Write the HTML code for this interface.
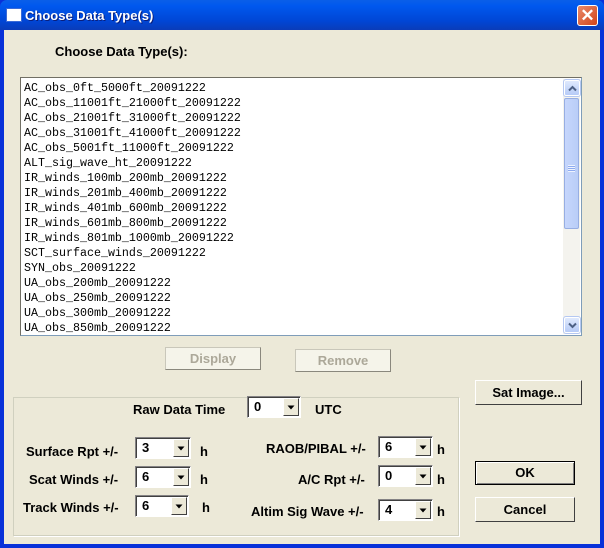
<!DOCTYPE html>
<html><head><style>
*{box-sizing:border-box;margin:0;padding:0}
body{width:604px;height:548px;overflow:hidden;background:#0831d9;font-family:"Liberation Sans",sans-serif;position:relative}
.a{position:absolute}
.title{left:0;top:0;width:604px;height:30px;background:linear-gradient(#0a5fe8,#0058ee 20%,#0046d5 70%,#0a3cb8);border-radius:7px 7px 0 0}
.body{left:4px;top:30px;width:596px;height:514px;background:#ece9d8}
.lbl{font-weight:bold;font-size:13px;color:#000;white-space:nowrap}
.list{left:20px;top:77px;width:562px;height:259px;background:#fff;border:1px solid #7f9db9;border-top-color:#716f64;border-left-color:#716f64}
.items{left:3px;top:3px;font-family:"Liberation Mono",monospace;font-size:11.67px;line-height:15px;color:#000;white-space:pre}
.sb{left:542px;top:1px;width:17px;height:255px;background:#f4f3ee}
.dis{background:#f5f4ea;border:1px solid #c9c7ba;color:#aca899;border-right-color:#8a887d;border-bottom-color:#8a887d}
.combo{background:#fff;border:1px solid #848284;border-right-color:#fff;border-bottom-color:#fff;box-shadow:inset 1px 1px 0 #404040;font-size:13px;font-weight:bold}
.combo span{position:absolute;left:6px;top:2px}
.combo i{position:absolute;right:1px;top:1px;width:16px;bottom:1px;background:#ece9d8;border:1px solid;border-color:#fff #404040 #404040 #fff}
.combo svg{position:absolute;left:3px;top:6px}
.sbtn{width:16px;height:16px;background:linear-gradient(#dfe9fd,#b6cbf7);border:1px solid #fff;border-radius:2px;outline:1px solid #b5c8f2}
.sbtn svg{position:absolute;left:3px;top:4px}
</style></head><body>
<div class="a title"></div>
<div class="a" style="left:7px;top:9px;width:14px;height:12px;background:#fff;border-top:3px solid #fff;box-shadow:0 0 0 1px #3a6ad6"></div>
<div class="a" style="left:25px;top:8px;color:#fff;font-weight:bold;font-size:13px;text-shadow:1px 1px #0a1e7a">Choose Data Type(s)</div>
<div class="a" style="left:577px;top:5px;width:21px;height:21px;background:linear-gradient(135deg,#e98a6b,#d1441a);border:1px solid #fff;border-radius:3px;color:#fff;font-size:17px;font-weight:bold;text-align:center;line-height:19px">✕</div>
<div class="a body"></div>
<div class="a lbl" style="left:55px;top:44px">Choose Data Type(s):</div>
<div class="a list">
<div class="a items">AC_obs_0ft_5000ft_20091222
AC_obs_11001ft_21000ft_20091222
AC_obs_21001ft_31000ft_20091222
AC_obs_31001ft_41000ft_20091222
AC_obs_5001ft_11000ft_20091222
ALT_sig_wave_ht_20091222
IR_winds_100mb_200mb_20091222
IR_winds_201mb_400mb_20091222
IR_winds_401mb_600mb_20091222
IR_winds_601mb_800mb_20091222
IR_winds_801mb_1000mb_20091222
SCT_surface_winds_20091222
SYN_obs_20091222
UA_obs_200mb_20091222
UA_obs_250mb_20091222
UA_obs_300mb_20091222
UA_obs_850mb_20091222</div>
<div class="a sb">
<div class="a sbtn" style="left:1px;top:1px"><svg width="9" height="7"><path d="M1 5.5L4.5 2L8 5.5" stroke="#4d6185" stroke-width="2" fill="none"/></svg></div>
<div class="a" style="left:1px;top:19px;width:15px;height:131px;background:linear-gradient(90deg,#c6d6fc,#b9cdf7);border:1px solid #97aee2;border-radius:2px"></div>
<div class="a" style="left:5px;top:86px;width:7px;height:7px;background:repeating-linear-gradient(#eef3fe 0 1px,#8eabf0 1px 2px)"></div>
<div class="a sbtn" style="left:1px;top:238px"><svg width="9" height="7"><path d="M1 1.5L4.5 5L8 1.5" stroke="#4d6185" stroke-width="2" fill="none"/></svg></div>
</div>
</div>
<div class="a dis lbl" style="left:165px;top:347px;width:96px;height:23px;text-align:center;line-height:21px;color:#aca899">Display</div>
<div class="a dis lbl" style="left:295px;top:349px;width:96px;height:23px;text-align:center;line-height:21px;color:#aca899">Remove</div>
<div class="a dis lbl" style="left:475px;top:380px;width:107px;height:25px;text-align:center;line-height:23px;color:#000;background:#ece9d8;border-color:#fff #404040 #404040 #fff">Sat Image...</div>
<div class="a lbl" style="left:475px;top:461px;width:100px;height:24px;text-align:center;line-height:22px;border:1px solid #000;box-shadow:inset 1px 1px #fff,inset -1px -1px #808080">OK</div>
<div class="a lbl" style="left:475px;top:497px;width:100px;height:25px;text-align:center;line-height:23px;border:1px solid;border-color:#fff #404040 #404040 #fff">Cancel</div>
<div class="a" style="left:13px;top:397px;width:446px;height:139px;border:1px solid #d0d0bf;box-shadow:1px 1px 0 #fff"></div>
<div class="a lbl" style="left:133px;top:402px">Raw Data Time</div>
<div class="a combo" style="left:247px;top:396px;width:54px;height:22px"><span>0</span><i><svg width="8" height="5"><path d="M0.5 0.5H7.5L4 4.5Z" fill="#000"/></svg></i></div>
<div class="a lbl" style="left:315px;top:402px">UTC</div>
<div class="a lbl" style="left:26px;top:444px">Surface Rpt +/-</div>
<div class="a combo" style="left:135px;top:437px;width:56px;height:22px"><span>3</span><i><svg width="8" height="5"><path d="M0.5 0.5H7.5L4 4.5Z" fill="#000"/></svg></i></div>
<div class="a lbl" style="left:200px;top:444px">h</div>
<div class="a lbl" style="left:29px;top:472px">Scat Winds +/-</div>
<div class="a combo" style="left:135px;top:466px;width:56px;height:22px"><span>6</span><i><svg width="8" height="5"><path d="M0.5 0.5H7.5L4 4.5Z" fill="#000"/></svg></i></div>
<div class="a lbl" style="left:200px;top:472px">h</div>
<div class="a lbl" style="left:23px;top:500px">Track Winds +/-</div>
<div class="a combo" style="left:135px;top:495px;width:54px;height:22px"><span>6</span><i><svg width="8" height="5"><path d="M0.5 0.5H7.5L4 4.5Z" fill="#000"/></svg></i></div>
<div class="a lbl" style="left:202px;top:500px">h</div>
<div class="a lbl" style="left:266px;top:441px">RAOB/PIBAL +/-</div>
<div class="a combo" style="left:378px;top:436px;width:55px;height:22px"><span>6</span><i><svg width="8" height="5"><path d="M0.5 0.5H7.5L4 4.5Z" fill="#000"/></svg></i></div>
<div class="a lbl" style="left:437px;top:442px">h</div>
<div class="a lbl" style="left:298px;top:472px">A/C Rpt +/-</div>
<div class="a combo" style="left:378px;top:465px;width:55px;height:22px"><span>0</span><i><svg width="8" height="5"><path d="M0.5 0.5H7.5L4 4.5Z" fill="#000"/></svg></i></div>
<div class="a lbl" style="left:437px;top:472px">h</div>
<div class="a lbl" style="left:251px;top:504px">Altim Sig Wave +/-</div>
<div class="a combo" style="left:378px;top:499px;width:55px;height:22px"><span>4</span><i><svg width="8" height="5"><path d="M0.5 0.5H7.5L4 4.5Z" fill="#000"/></svg></i></div>
<div class="a lbl" style="left:437px;top:504px">h</div>
</body></html>
